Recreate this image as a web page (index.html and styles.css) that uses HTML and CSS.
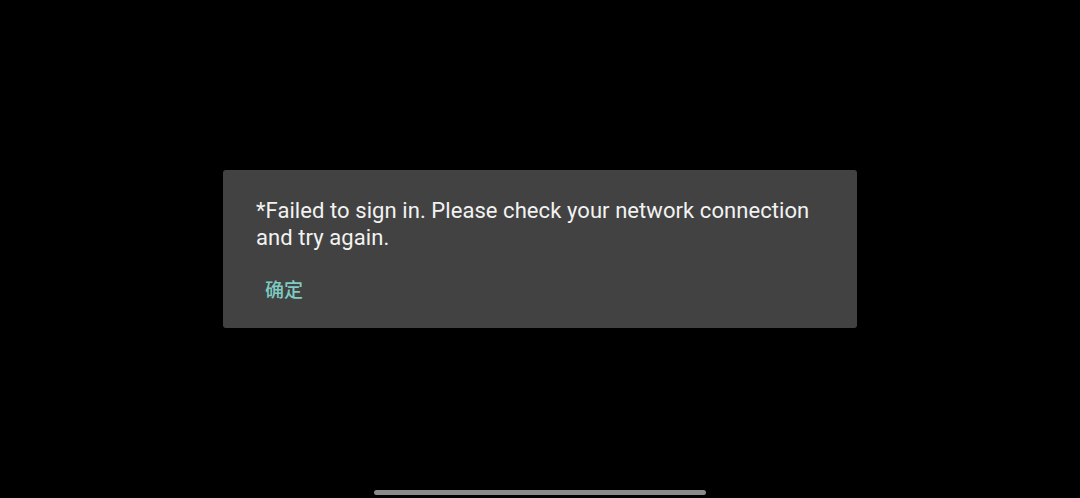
FILE: index.html
```html
<!DOCTYPE html>
<html lang="en">
<head>
<meta charset="utf-8">
<title>Sign in</title>
<link rel="stylesheet" href="styles.css">
</head>
<body>
<div class="screen">
  <div class="dialog" role="alertdialog">
    <p class="dialog-message">*Failed to sign in. Please check your network connection and try again.</p>
    <div class="dialog-actions">
      <button class="dialog-button" type="button">确定</button>
    </div>
  </div>
  <div class="nav-handle"></div>
</div>
</body>
</html>
```

FILE: styles.css
```css
html, body {
  margin: 0;
  padding: 0;
  background: #000;
}

.screen {
  position: relative;
  width: 1080px;
  height: 498px;
  background: #000;
  display: flex;
  flex-direction: column;
  align-items: center;
  padding-top: 170px;
  box-sizing: border-box;
}

.dialog {
  width: 634px;
  height: 158px;
  box-sizing: border-box;
  background: #424242;
  border-radius: 3px;
  padding: 27px 33px 0 33px;
  font-family: Roboto, "Noto Sans", sans-serif;
}

.dialog-message {
  margin: 0;
  color: #f2f2f2;
  font-size: 22px;
  letter-spacing: 0.07px;
  line-height: 27px;
  width: 565px;
}

.dialog-actions {
  display: flex;
  margin-top: 25px;
}

.dialog-button {
  background: none;
  border: 0;
  padding: 0 9px;
  margin: 0;
  color: #7fcbc2;
  font-family: "Noto Sans CJK SC", sans-serif;
  font-size: 19px;
  font-weight: 500;
  line-height: 26px;
}

.nav-handle {
  position: absolute;
  left: 374px;
  top: 490px;
  width: 332px;
  height: 5px;
  border-radius: 3px;
  background: #8a8a8a;
}
```
